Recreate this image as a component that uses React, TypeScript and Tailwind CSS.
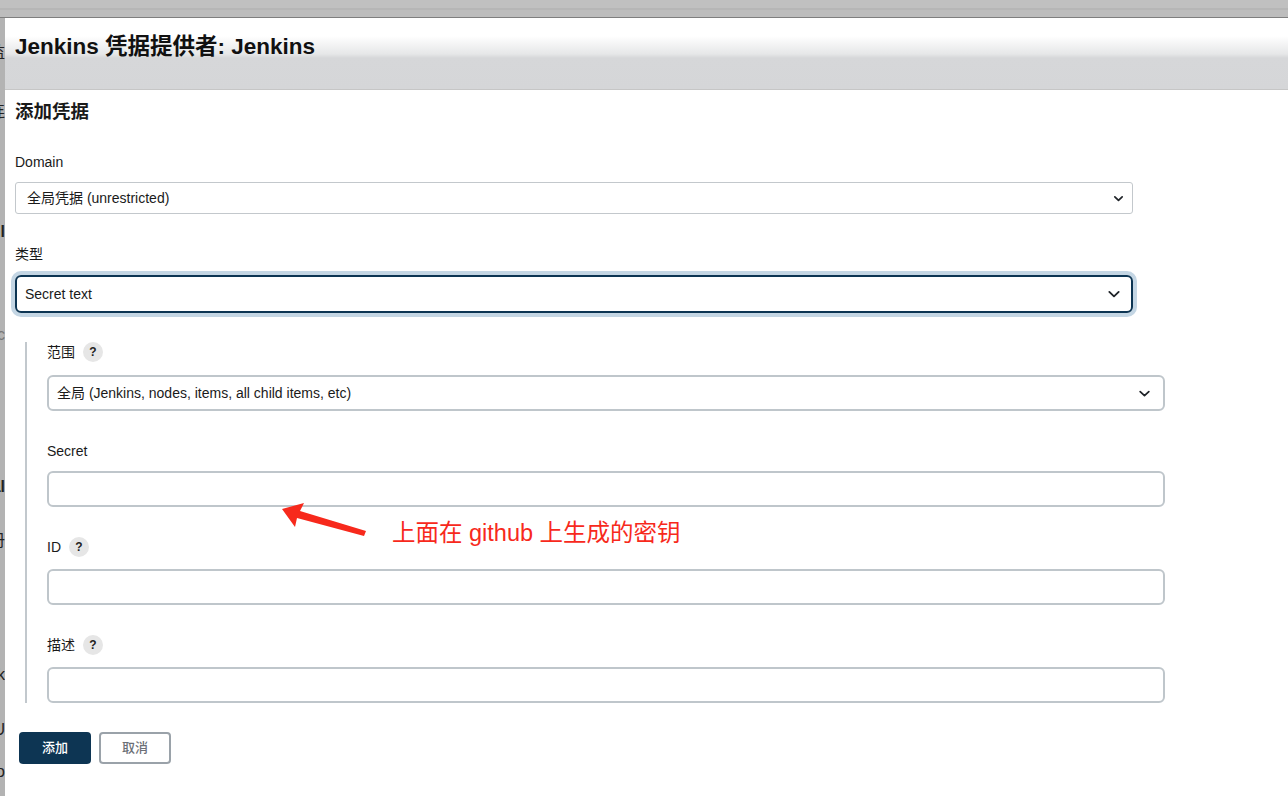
import React from "react";

const font = { fontFamily: '"Liberation Sans", "Noto Sans CJK SC", Arial, sans-serif' };

function Chevron({ size = 12, stroke = 1.8 }: { size?: number; stroke?: number }) {
  return (
    <svg width={size} height={size} viewBox="0 0 12 12" fill="none">
      <path d="M2 4.2 L6 8 L10 4.2" stroke="#1f2328" strokeWidth={stroke} strokeLinecap="round" strokeLinejoin="round" />
    </svg>
  );
}

function Help() {
  return (
    <span className="inline-flex h-[20px] w-[20px] items-center justify-center rounded-full bg-[#e6e6e6] text-[12px] font-bold text-[#222]">
      ?
    </span>
  );
}

function Label({ text, help }: { text: string; help?: boolean }) {
  return (
    <div className="flex h-[20px] items-center gap-[8px] text-[14px] text-[#1a1a1a]">
      <span>{text}</span>
      {help && <Help />}
    </div>
  );
}

function TextInput() {
  return <div className="h-[36px] w-[1118px] rounded-[6px] border-2 border-[#bfc6cb] bg-white" />;
}

const stripRows: { h: number; text?: string; bold?: boolean; line?: boolean; color?: string }[] = [
  { h: 24 },
  { h: 22, text: "监" },
  { h: 37, line: true },
  { h: 22, text: "连" },
  { h: 98, line: true },
  { h: 22, text: "nl", bold: true },
  { h: 81, line: true },
  { h: 22, text: "nc", color: "#777" },
  { h: 34, line: true },
  { h: 96, line: true },
  { h: 22, text: "al", bold: true },
  { h: 32 },
  { h: 22, text: "册" },
  { h: 76, line: true },
  { h: 36, line: true },
  { h: 22, text: "k" },
  { h: 33, line: true },
  { h: 22, text: "U" },
  { h: 20, line: true },
  { h: 22, text: "o" },
];

export default function App() {
  return (
    <div className="relative h-[796px] w-[1288px] overflow-hidden bg-white" style={font}>
      {/* top band */}
      <div className="flex flex-col">
        <div className="h-[8px] bg-[#c0c0c0]" />
        <div className="h-[2px] bg-[#b6b6b6]" />
        <div className="h-[7px] bg-[#bdbdbd]" />
        <div className="h-[1px] bg-[#7f7f7f]" />
      </div>
      <div className="flex">
        {/* background page strip */}
        <div className="flex h-[778px] w-[5px] flex-col items-end overflow-hidden bg-[#b3b3b3] text-[16px] leading-[22px] text-[#222]">
          {stripRows.map((r, i) => (
            <div
              key={i}
              className={`flex shrink-0 justify-end whitespace-nowrap ${r.line ? "border-b border-[#999]" : ""} ${r.bold ? "font-bold" : ""}`}
              style={{ height: r.h, color: r.color }}
            >
              {r.text}
            </div>
          ))}
        </div>

        {/* dialog */}
        <div className="flex-1">
          <div className="h-[72px] border-b border-[#c6c6c6] bg-[linear-gradient(to_bottom,#ffffff_0px,#ffffff_18px,#e6e7e8_36px,#d6d7d9_40px,#d5d6d8_100%)] pl-[10px] pt-[15px]">
            <h1 className="text-[22.5px] font-bold leading-[28px] text-[#111]">Jenkins 凭据提供者: Jenkins</h1>
          </div>

          <div className="flex flex-col items-start pl-[10px]">
            <h2 className="mt-[9px] text-[18.5px] font-bold leading-[26px] text-[#1a1a1a]">添加凭据</h2>

            <div className="mt-[28px] flex flex-col gap-[11px]">
              <div className="text-[14px] leading-[18px] text-[#1a1a1a]">Domain</div>
              <div className="flex h-[32px] w-[1118px] items-center justify-between rounded-[3px] border border-[#c3c8cc] pl-[11px] pr-[8px] text-[14px] text-[#1a1a1a]">
                <span>全局凭据 (unrestricted)</span>
                <Chevron size={11} stroke={1.9} />
              </div>
            </div>

            <div className="mt-[31px] flex flex-col gap-[12px]">
              <div className="text-[14px] leading-[18px] text-[#1a1a1a]">类型</div>
              <div className="flex h-[38px] w-[1118px] items-center justify-between rounded-[6px] border-2 border-[#0d3553] pl-[8px] pr-[10px] text-[14px] text-[#1a1a1a] shadow-[0_0_0_4px_#c4d6e4]">
                <span>Secret text</span>
                <Chevron size={14} stroke={1.6} />
              </div>
            </div>

            <div className="ml-[10px] mt-[29px] flex flex-col gap-[30px] border-l-2 border-[#c2c8cd] pl-[20px]">
              <div className="flex flex-col gap-[13px]">
                <Label text="范围" help />
                <div className="flex h-[36px] w-[1118px] items-center justify-between rounded-[6px] border-2 border-[#bfc6cb] pl-[8px] pr-[12px] text-[14px] text-[#1a1a1a]">
                  <span>全局 (Jenkins, nodes, items, all child items, etc)</span>
                  <Chevron size={13} stroke={1.6} />
                </div>
              </div>

              <div className="flex flex-col gap-[10px]">
                <Label text="Secret" />
                <TextInput />
              </div>

              <div className="flex flex-col gap-[12px]">
                <Label text="ID" help />
                <TextInput />
              </div>

              <div className="flex flex-col gap-[12px]">
                <Label text="描述" help />
                <TextInput />
              </div>
            </div>

            <div className="ml-[4px] mt-[29px] flex gap-[8px]">
              <button className="flex h-[32px] w-[72px] items-center justify-center rounded-[4px] bg-[#0d3553] text-[13px] font-medium text-white">
                添加
              </button>
              <button className="flex h-[32px] w-[72px] items-center justify-center rounded-[4px] border-2 border-[#9aa2a9] bg-white text-[13px] font-medium text-[#6b6f76]">
                取消
              </button>
            </div>
          </div>
        </div>
      </div>

      {/* annotation overlay */}
      <svg className="absolute left-0 top-0" width="1288" height="796" viewBox="0 0 1288 796">
        <polygon points="282,509 304,503 300,511 366,531 364,536 297,518 295,527" fill="#f7291c" />
      </svg>
      <div className="absolute left-[392px] top-[518px] whitespace-nowrap text-[23.5px] leading-[30px] text-[#f7291c]">
        上面在 github 上生成的密钥
      </div>
    </div>
  );
}
